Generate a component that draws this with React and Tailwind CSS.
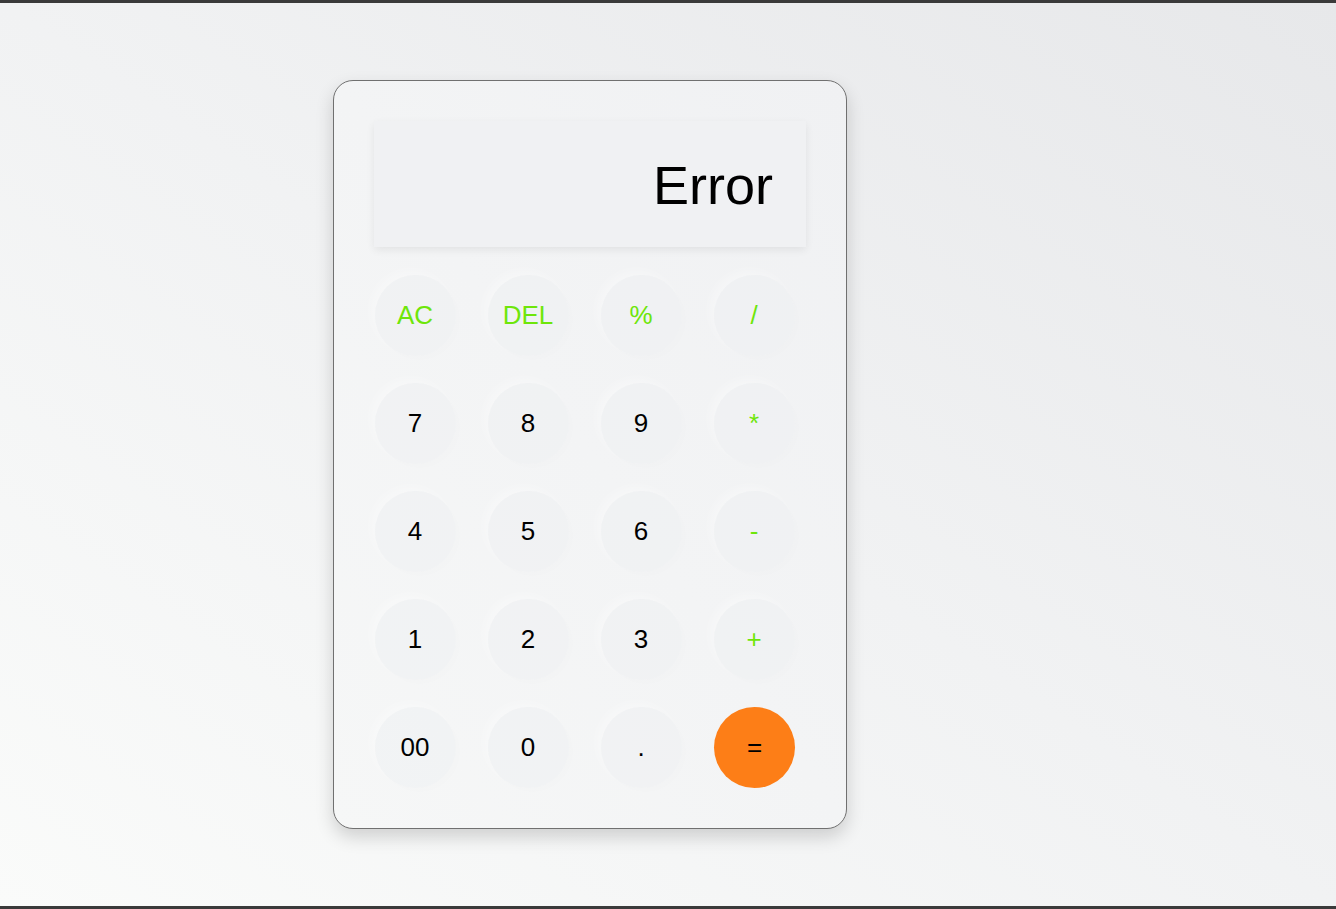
import React, { useState } from 'react';

const keys = [
    { label: 'AC', op: true },
    { label: 'DEL', op: true },
    { label: '%', op: true },
    { label: '/', op: true },
    { label: '7' },
    { label: '8' },
    { label: '9' },
    { label: '*', op: true },
    { label: '4' },
    { label: '5' },
    { label: '6' },
    { label: '-', op: true },
    { label: '1' },
    { label: '2' },
    { label: '3' },
    { label: '+', op: true },
    { label: '00' },
    { label: '0' },
    { label: '.' },
    { label: '=', equal: true },
];

const App = () => {
    const [display] = useState('Error');

    return (
        <div className="min-h-[909px] flex flex-col bg-[#3a3a3a] font-['Liberation_Sans',Arial,sans-serif]">
            <div className="h-[3px]" />
            <div className="flex-1 bg-[linear-gradient(to_top_right,#fafbfa,#f1f2f3_50%,#e7e8ea)] pt-[77px] pl-[333px]">
                <div className="w-[514px] h-[749px] rounded-[20px] border border-[#707070] bg-[#f1f2f3] bg-[linear-gradient(to_top_right,#f6f7f7,#f0f1f3)] p-[40px] shadow-[0_8px_18px_rgba(0,0,0,0.16)]">
                    {/* display */}
                    <div className="h-[126px] bg-[#f0f1f3] shadow-[0_3px_8px_rgba(0,0,0,0.07)] flex items-center justify-end pr-[33px] text-[54px] text-black pt-[2px]">
                        {display}
                    </div>

                    {/* keypad */}
                    <div className="mt-[28px] pl-[1px] grid grid-cols-[repeat(4,81px)] gap-x-[32px] gap-y-[27px]">
                        {keys.map((k) => (
                            <button
                                key={k.label}
                                className={
                                    k.equal
                                        ? 'w-[81px] h-[81px] rounded-full bg-[#fd7e17] text-black text-[26px] flex items-center justify-center'
                                        : k.op
                                        ? 'w-[81px] h-[81px] rounded-full bg-[rgba(238,239,241,0.45)] text-[#6ee60a] text-[26px] flex items-center justify-center shadow-[-5px_-5px_10px_rgba(255,255,255,0.3),4px_4px_10px_rgba(0,0,0,0.006)] pr-[1px]'
                                        : 'w-[81px] h-[81px] rounded-full bg-[rgba(238,239,241,0.45)] text-black text-[26px] flex items-center justify-center shadow-[-5px_-5px_10px_rgba(255,255,255,0.3),4px_4px_10px_rgba(0,0,0,0.006)] pr-[1px]'
                                }
                            >
                                {k.label}
                            </button>
                        ))}
                    </div>
                </div>
            </div>
            <div className="h-[3px]" />
        </div>
    );
};

export default App;
